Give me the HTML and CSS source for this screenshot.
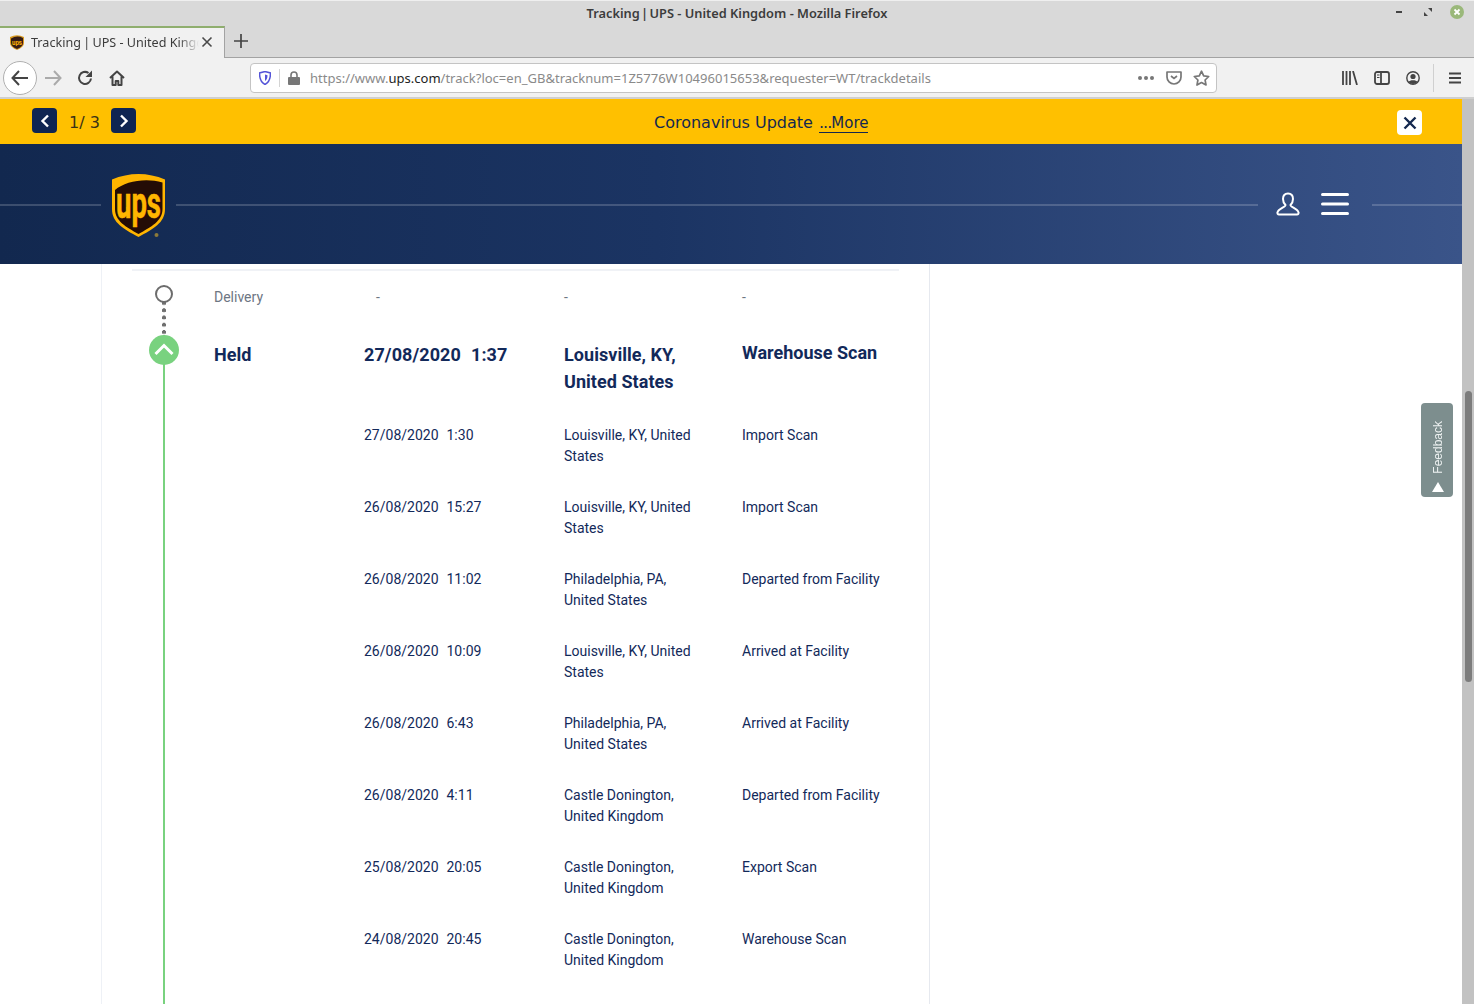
FILE: index.html
```html
<!DOCTYPE html>
<html lang="en">
<head>
<meta charset="utf-8">
<title>Tracking | UPS - United Kingdom</title>
<link rel="stylesheet" href="styles.css">
</head>
<body>
<div class="window">
  <div class="titlebar">
    <span class="title">Tracking <span class="pipe">|</span> UPS - United Kingdom - Mozilla Firefox</span>
    <div class="winctl">
      <svg width="12" height="12" viewBox="0 0 12 12"><rect x="2" y="5" width="6" height="2" fill="#444"/></svg>
      <svg width="12" height="12" viewBox="0 0 12 12"><path d="M6 2h4v4zM6 10H2V6z" fill="#444"/></svg>
      <svg width="14" height="14" viewBox="0 0 14 14"><circle cx="7" cy="7" r="7" fill="#9ab87a"/><path d="M4.5 4.5l5 5M9.5 4.5l-5 5" stroke="#fff" stroke-width="1.8"/></svg>
    </div>
  </div>
  <div class="tabbar">
    <div class="tab">
      <svg class="favicon" width="16" height="16" viewBox="0 0 16 16"><path d="M1 3Q8-0.5 15 3V9Q15 13 8 16Q1 13 1 9Z" fill="#d99a20"/><path d="M2 4.5Q8 1 14 4V9Q14 12.500 8 15Q2 12.500 2 9Z" fill="#351c15"/><text class="favtext" x="8" y="10.500" text-anchor="middle" textLength="10" lengthAdjust="spacingAndGlyphs">ups</text></svg>
      <span class="tab-title">Tracking <span class="pipe-tab">|</span> UPS - United Kingdom</span>
      <svg class="tab-close" width="12" height="12" viewBox="0 0 12 12"><path d="M1.500 1.500l9 9M10.500 1.500l-9 9" stroke="#4a4a4a" stroke-width="1.600"/></svg>
    </div>
    <svg class="newtab" width="14" height="14" viewBox="0 0 14 14"><path d="M7 0v14M0 7h14" stroke="#444" stroke-width="1.700"/></svg>
  </div>
  <div class="toolbar">
    <div class="backbtn"><svg width="18" height="16" viewBox="0 0 18 16"><path d="M8 1L1.500 8 8 15M1.500 8H17" fill="none" stroke="#444" stroke-width="2"/></svg></div>
    <svg class="navicon fwd" width="17" height="16" viewBox="0 0 17 16"><path d="M9 1l6.500 7L9 15M15.500 8H0" fill="none" stroke="#aaa" stroke-width="2"/></svg>
    <svg class="navicon reload" width="16" height="16" viewBox="0 0 16 16"><path d="M14 8.500A6 6 0 1 1 11.500 3" fill="none" stroke="#444" stroke-width="2"/><path d="M15 0.500V7H8.500z" fill="#444"/></svg>
    <svg class="navicon home" width="16" height="16" viewBox="0 0 16 16"><path d="M1 8l7-6.500L15 8M3.500 6.500V15h3.200v-4h2.600v4h3.200V6.500" fill="none" stroke="#444" stroke-width="2" stroke-linejoin="round"/></svg>
    <div class="urlbar">
      <svg class="shield" width="12" height="14" viewBox="0 0 12 14"><path d="M6 .5L11.500 2C11.500 8 10 11.500 6 13.500 2 11.500.5 8 .5 2Z" fill="#fff" stroke="#5454d8" stroke-width="1.500"/><path d="M6 3.500L8.500 4.300C8.500 7 7.800 9 6 10Z" fill="#5454d8"/></svg>
      <span class="urlsep"></span>
      <svg class="lock" width="12" height="14" viewBox="0 0 12 14"><path d="M3 6V4a3 3 0 0 1 6 0v2" fill="none" stroke="#777" stroke-width="1.600"/><rect y="6" width="12" height="8" rx="1" fill="#777"/></svg>
      <span class="url">https://www.<b>ups.com</b>/track?loc=en_GB&amp;tracknum=1Z5776W10496015653&amp;requester=WT/trackdetails</span>
      <span class="dots"><i></i><i></i><i></i></span>
      <svg class="pocket" width="16" height="15" viewBox="0 0 16 15"><path d="M1 2h14v5a7 7 0 0 1-14 0Z" fill="none" stroke="#777" stroke-width="1.700" stroke-linejoin="round"/><path d="M5 6l3 2.500L11 6" fill="none" stroke="#777" stroke-width="1.700"/></svg>
      <svg class="star" width="17" height="16" viewBox="0 0 17 16"><path d="M8.500 1.200l2.200 4.600 5 .7-3.600 3.500.9 5-4.500-2.400L4 15l.9-5L1.300 6.500l5-.7Z" fill="none" stroke="#777" stroke-width="1.700" stroke-linejoin="round"/></svg>
    </div>
    <div class="tools">
      <svg width="16" height="14" viewBox="0 0 16 14"><path d="M1 0v14M4.500 0v14M8 0v14M11 0l4 14" stroke="#444" stroke-width="1.800" fill="none"/></svg>
      <svg width="16" height="14" viewBox="0 0 16 14"><rect x="1" y="1" width="14" height="12" rx="2" fill="none" stroke="#444" stroke-width="1.800"/><path d="M7 1v12" stroke="#444" stroke-width="1.800"/><path d="M3 4h2.500M3 6.500h2.500" stroke="#444" stroke-width="1.200"/></svg>
      <svg width="14" height="14" viewBox="0 0 14 14"><circle cx="7" cy="7" r="6.200" fill="none" stroke="#444" stroke-width="1.400"/><circle cx="7" cy="5.500" r="2.600" fill="#444"/><path d="M2.500 11c1-2.500 8-2.500 9 0a6 6 0 0 1-9 0Z" fill="#444"/></svg>
      <span class="toolsep"></span>
      <svg width="12" height="12" viewBox="0 0 12 12"><path d="M0 1.500h12M0 6h12M0 10.500h12" stroke="#444" stroke-width="1.800"/></svg>
    </div>
  </div>
  <div class="viewport">
    <div class="page">
      <div class="banner">
        <div class="pager">
          <button class="pagebtn"><svg width="10" height="14" viewBox="0 0 10 14"><path d="M8 1.500L2.500 7 8 12.500" fill="none" stroke="#fff" stroke-width="2.400"/></svg></button>
          <span class="pagenum">1/ 3</span>
          <button class="pagebtn"><svg width="10" height="14" viewBox="0 0 10 14"><path d="M2 1.500L7.500 7 2 12.500" fill="none" stroke="#fff" stroke-width="2.400"/></svg></button>
        </div>
        <div class="notice">Coronavirus Update <a class="more"><span class="ellipsis">...</span>More</a></div>
        <button class="closebtn"><svg width="14" height="14" viewBox="0 0 14 14"><path d="M1.500 1.500l11 11M12.500 1.500l-11 11" stroke="#14284f" stroke-width="2.400"/></svg></button>
      </div>
      <header class="header">
        <span class="rule rule-left"></span>
        <svg class="logo" width="55" height="66" viewBox="0 0 55 66">
          <path d="M1 6.500Q14 1 27.500 1T54 6.500V36C54 50 42 56 27.500 64 13 56 1 50 1 36Z" fill="#ffb500"/>
          <path d="M4 17C14 8.500 34 4.500 51.500 9.500V36C51.500 48 40 54 27.500 61 15 54 4 48 4 36Z" fill="#240c06"/>
          <text class="logotext" x="27.500" y="45" text-anchor="middle" textLength="45" lengthAdjust="spacingAndGlyphs">ups</text>
          <circle cx="45.500" cy="62" r="2" fill="#8c7a3a"/>
        </svg>
        <span class="rule rule-mid"></span>
        <div class="headicons">
          <svg width="24" height="24" viewBox="0 0 24 24"><path d="M12 1.500C8.500 1.500 7 4 7 7c0 3 1.500 5 2.500 6 .5 2-7.500 3.500-8 7.500-.2 1 .3 2 1.500 2h18c1.200 0 1.700-1 1.500-2-.5-4-8.500-5.500-8-7.500 1-1 2.500-3 2.500-6 0-3-1.500-5.500-5-5.500Z" fill="none" stroke="#fff" stroke-width="2"/></svg>
          <svg width="28" height="24" viewBox="0 0 28 24"><path d="M1.500 2.500h25M1.500 12h25M1.500 21.500h25" stroke="#fff" stroke-width="3" stroke-linecap="round"/></svg>
        </div>
        <span class="rule rule-right"></span>
      </header>
      <main class="content">
        <section class="card">
          <div class="topline"></div>
          <div class="row row-delivery">
            <div class="track"><span class="dotted"></span><span class="ring"></span></div>
            <div class="status">Delivery</div>
            <div class="dash dash-first">-</div>
            <div class="dash">-</div>
            <div class="dash">-</div>
          </div>
          <div class="row row-held">
            <div class="track track-line"><span class="heldmark"><svg width="22" height="14" viewBox="0 0 22 14"><path d="M2.500 12L11 3.500 19.500 12" fill="none" stroke="#fff" stroke-width="3"/></svg></span></div>
            <div class="held-status">Held</div>
            <div class="held-date"><span>27/08/2020</span><span>1:37</span></div>
            <div class="held-loc">Louisville, KY, United States</div>
            <div class="held-act">Warehouse Scan</div>
          </div>
          <div class="row"><div class="track track-line"></div><div></div><div class="date"><span>27/08/2020</span><span>1:30</span></div><div class="loc">Louisville, KY, United States</div><div>Import Scan</div></div>
          <div class="row"><div class="track track-line"></div><div></div><div class="date"><span>26/08/2020</span><span>15:27</span></div><div class="loc">Louisville, KY, United States</div><div>Import Scan</div></div>
          <div class="row"><div class="track track-line"></div><div></div><div class="date"><span>26/08/2020</span><span>11:02</span></div><div class="loc">Philadelphia, PA,<br>United States</div><div>Departed from Facility</div></div>
          <div class="row"><div class="track track-line"></div><div></div><div class="date"><span>26/08/2020</span><span>10:09</span></div><div class="loc">Louisville, KY, United States</div><div>Arrived at Facility</div></div>
          <div class="row"><div class="track track-line"></div><div></div><div class="date"><span>26/08/2020</span><span>6:43</span></div><div class="loc">Philadelphia, PA,<br>United States</div><div>Arrived at Facility</div></div>
          <div class="row"><div class="track track-line"></div><div></div><div class="date"><span>26/08/2020</span><span>4:11</span></div><div class="loc">Castle Donington,<br>United Kingdom</div><div>Departed from Facility</div></div>
          <div class="row"><div class="track track-line"></div><div></div><div class="date"><span>25/08/2020</span><span>20:05</span></div><div class="loc">Castle Donington,<br>United Kingdom</div><div>Export Scan</div></div>
          <div class="row"><div class="track track-line"></div><div></div><div class="date"><span>24/08/2020</span><span>20:45</span></div><div class="loc">Castle Donington,<br>United Kingdom</div><div>Warehouse Scan</div></div>
          <div class="row"><div class="track track-line"></div></div>
        </section>
      </main>
      <div class="feedback"><span class="fb-text">Feedback</span><span class="fb-arrow"></span></div>
    </div>
    <div class="scrollbar"><div class="thumb"></div></div>
  </div>
</div>
</body>
</html>
```
FILE: styles.css
```css
* { box-sizing: border-box; }
html, body { margin: 0; height: 100%; overflow: hidden; }
body { font-family: "Noto Sans", sans-serif; background: #fff; }
.window { width: 1474px; height: 1004px; display: flex; flex-direction: column; overflow: hidden; }

.titlebar { height: 26px; flex: none; background: #d9d9d9; border-top: 1px solid #efefef; padding-bottom: 2px; display: flex; align-items: center; justify-content: center; position: relative; }
.title { font-size: 12.8px; font-weight: 600; color: #3c3c3c; }
.pipe { margin: 0 -2px; }
.winctl { position: absolute; right: 10px; top: 4px; display: flex; align-items: center; gap: 16px; }

.tabbar { height: 32px; flex: none; background: #d9d9d9; border-bottom: 1px solid #a3a3a3; display: flex; align-items: stretch; }
.tab { width: 225px; height: 32px; background: #f1f1f1; border-top: 2px solid #8fae6e; border-right: 1px solid #a3a3a3; display: flex; align-items: center; padding: 0 11px 2px 9px; position: relative; }
.favicon { flex: none; }
.favtext { font-family: "Roboto", sans-serif; font-weight: 700; font-size: 8px; fill: #ffb500; }
.tab-title { margin-left: 6px; width: 169px; overflow: hidden; white-space: nowrap; font-size: 12.6px; color: #3c3c3c; -webkit-mask-image: linear-gradient(90deg, #000 88%, transparent); mask-image: linear-gradient(90deg, #000 88%, transparent); }
.pipe-tab { margin: 0 -1px; }
.tab-close { flex: none; margin-left: 2px; }
.newtab { margin: 8px 0 0 9px; }

.toolbar { height: 41px; flex: none; background: #f1f1f1; border-bottom: 2px solid #cfcfcf; display: flex; align-items: center; padding-left: 3px; }
.backbtn { width: 34px; height: 34px; border-radius: 50%; background: #fff; border: 1px solid #b0b0b0; display: flex; align-items: center; justify-content: center; flex: none; }
.navicon { flex: none; }
.fwd { margin-left: 8px; }
.reload { margin-left: 15px; }
.home { margin-left: 16px; }
.urlbar { margin-left: 125px; width: 967px; height: 30px; background: #fff; border: 1px solid #c4c4c4; border-radius: 4px; display: flex; align-items: center; padding-left: 8px; flex: none; }
.shield { flex: none; }
.urlsep { width: 1px; height: 18px; background: #d4d4d4; margin-left: 8px; }
.lock { margin-left: 8px; flex: none; }
.url { margin-left: 10px; font-size: 13.02px; color: #8a8a8a; white-space: nowrap; width: 828px; overflow: hidden; }
.url b { font-weight: 400; color: #222; }
.dots { display: flex; gap: 2px; width: 20px; flex: none; }
.dots i { width: 4px; height: 4px; border-radius: 50%; background: #777; }
.pocket { margin-left: 8px; flex: none; }
.star { margin-left: 11px; flex: none; }
.tools { margin-left: 125px; display: flex; align-items: center; gap: 16px; flex: none; }
.tools svg { flex: none; }
.toolsep { width: 1px; height: 28px; background: #d0d0d0; margin: 0 -1px 0 -3px; }

.viewport { flex: 1; display: flex; min-height: 0; }
.page { width: 1462px; flex: none; position: relative; overflow: hidden; background: #fff; }
.scrollbar { width: 12px; flex: none; background: #c2c2c2; padding: 292px 2px 0 3px; }
.thumb { height: 291px; border-radius: 4px; background: #7c7c7c; }

.banner { height: 45px; background: #ffc000; display: flex; align-items: center; padding: 0 40px 0 32px; }
.pager { width: 622px; display: flex; align-items: center; margin-top: -2px; }
.pagebtn { width: 25px; height: 25px; border: 0; border-radius: 4px; padding: 0; background: #0f2552; display: flex; align-items: center; justify-content: center; }
.pagenum { width: 54px; padding: 3px 0 0 12px; font-family: "DejaVu Sans", sans-serif; font-size: 16px; color: #3a3217; }
.notice { font-family: "DejaVu Sans", sans-serif; font-size: 16px; color: #14284f; white-space: nowrap; padding-top: 2px; }
.more { border-bottom: 1px solid #14284f; font-size: 15px; margin-left: 1px; }
.ellipsis { font-size: 16px; letter-spacing: -1px; }
.closebtn { margin: 2px 0 0 auto; width: 25px; height: 25px; border: 0; border-radius: 4px; padding: 0; background: #fff; display: flex; align-items: center; justify-content: center; }

.header { height: 120px; background: linear-gradient(90deg, #12284f 0%, #1b3463 45%, #3a5489 100%); display: flex; align-items: center; padding-top: 4px; }
.rule { height: 2px; background: rgba(255,255,255,.18); flex: none; margin-top: -2px; }
.rule-left { width: 101px; }
.logo { flex: none; margin: -1px 10px 0; overflow: visible; }
.logotext { font-family: "Roboto", sans-serif; font-weight: 700; font-size: 44px; fill: #ffb500; stroke: #ffb500; stroke-width: .5px; }
.rule-mid { width: 1082px; }
.headicons { width: 114px; display: flex; align-items: center; gap: 21px; padding-left: 18px; flex: none; margin-top: -4px; }
.rule-right { width: 90px; }

.content { padding-left: 101px; }
.card { width: 829px; height: 760px; overflow: hidden; border-left: 1px solid #eef1f6; border-right: 1px solid #e6e9ef; padding: 5px 30px 0 30px; font-family: "Roboto", sans-serif; color: #12295a; }
.topline { height: 2px; background: #f0f2f6; }
.row { display: grid; grid-template-columns: 82px 150px 200px 178px 156px; height: 72px; font-size: 14px; line-height: 21px; }
.row-delivery { height: 64px; }
.row-held { height: 90px; }
.track { position: relative; }
.track-line::before { content: ""; display: block; width: 2px; height: 100%; margin-left: 31px; background: #79d27f; }
.ring { position: absolute; left: 23px; top: 14px; width: 18px; height: 18px; background: #fff; border: 2px solid #6c6c6c; border-radius: 50%; }
.dotted { position: absolute; left: 30px; top: 30px; width: 4px; height: 35px; background: radial-gradient(circle at 2px 2px, #6f6f6f 1.9px, transparent 2.2px) 0 0 / 4px 7.25px repeat-y; }
.heldmark { position: absolute; left: 17px; top: 0; width: 30px; height: 30px; border-radius: 50%; background: #79d27f; display: flex; align-items: center; justify-content: center; padding-bottom: 3px; z-index: 1; }
.status { padding-top: 16px; color: #6d7683; }
.dash { padding-top: 16px; color: #6d7683; }
.dash-first { padding-left: 12px; }
.held-status { font-size: 18px; font-weight: 700; padding-top: 6px; line-height: 27px; }
.held-date { font-size: 18px; font-weight: 700; padding-top: 6px; line-height: 27px; display: flex; gap: 10px; letter-spacing: .1px; }
.held-loc { font-size: 18px; font-weight: 700; padding-top: 6px; line-height: 27px; padding-right: 30px; letter-spacing: .05px; }
.held-act { font-size: 18px; font-weight: 700; padding-top: 4px; line-height: 27px; }
.date { display: flex; gap: 8px; }
.loc { padding-right: 20px; }

.feedback { position: absolute; left: 1421px; top: 304px; width: 32px; height: 94px; border-radius: 4px; background: #7d8e8e; display: flex; flex-direction: column; align-items: center; padding-top: 18px; font-family: "Liberation Sans", sans-serif; }
.fb-text { writing-mode: vertical-rl; transform: rotate(180deg); font-size: 12px; color: #eef2f2; margin-left: 2px; }
.fb-arrow { margin: 8px 0 0 2px; width: 0; height: 0; border-left: 6px solid transparent; border-right: 6px solid transparent; border-bottom: 10px solid #fff; }
```
